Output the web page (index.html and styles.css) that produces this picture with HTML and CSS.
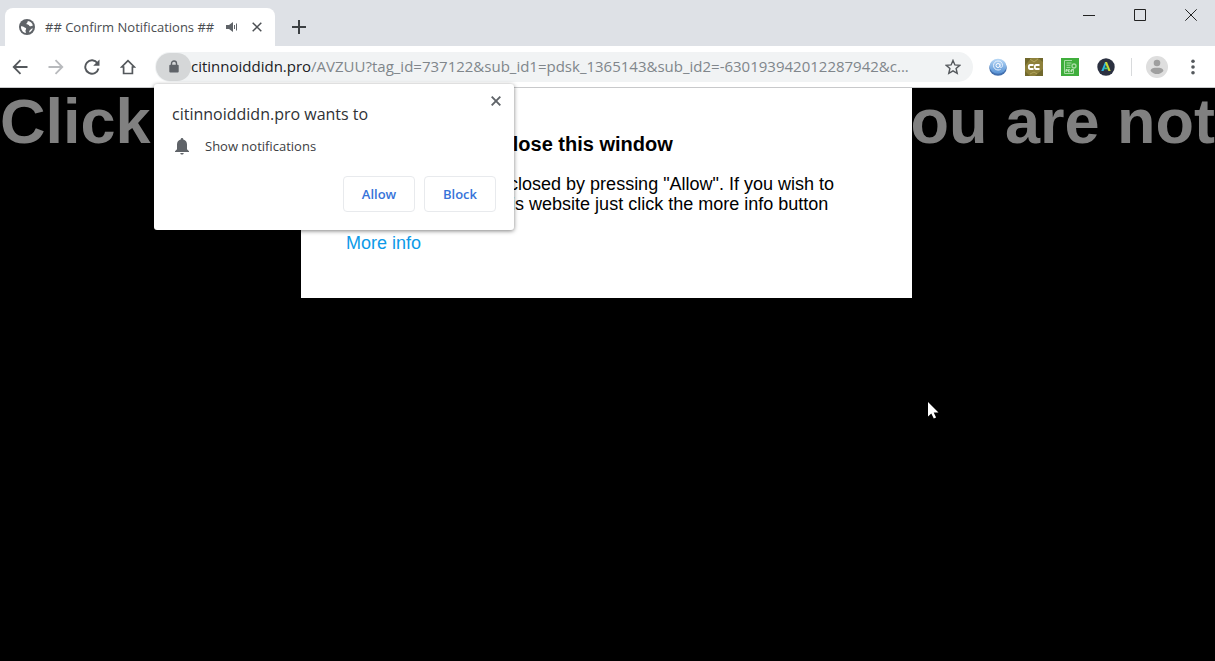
FILE: index.html
```html
<!DOCTYPE html>
<html lang="en">
<head>
<meta charset="utf-8">
<title>## Confirm Notifications ##</title>
<link rel="stylesheet" href="styles.css">
</head>
<body>
<div class="browser">
  <header class="tabstrip">
    <div class="tab">
      <svg class="favicon" viewBox="0 0 16 16"><circle cx="8" cy="8" r="8" fill="#5f6368"/><path d="M2 7.200C3.200 7 4.200 7.300 5 8c.7.700 1.900.500 2.100 1.500.2 1-.8 1.400-.6 2.500.1.800.6 1.300.3 2C4 13.500 1.700 10.800 2 7.200zM8.800 2c2.700.3 4.500 2 5.100 4.400-1.200.2-1.800 1-2.900.8-.9-.2-.8-1.200-1.800-1.400-1-.1-1.800-.2-1.700-1.200.1-.9 1.200-.8 1.300-2.600zM13.800 9.300c-.6 2-1.800 3.400-3.500 4.200-.3-1.200.2-2 1.100-2.800.8-.7 1.400-1.300 2.400-1.400z" fill="#fff"/></svg>
      <span class="tab-title">## Confirm Notifications ##</span>
      <svg class="audio" viewBox="0 0 12 12"><path d="M0 4h3l4-3v10L3 8H0z" fill="#5f6368"/><path d="M8.500 4v4M10.500 2.500v7" stroke="#5f6368" fill="none"/></svg>
      <button class="plain tab-close" aria-label="Close tab"><svg viewBox="0 0 10 10"><path d="M.7.700l8.600 8.600M9.300.700L.7 9.300" stroke="#4b4f53" stroke-width="1.500"/></svg></button>
    </div>
    <button class="plain new-tab" aria-label="New tab"><svg viewBox="0 0 14 14"><path d="M7 0v14M0 7h14" stroke="#3c4043" stroke-width="2"/></svg></button>
    <div class="window-controls">
      <button class="plain" aria-label="Minimize"><svg viewBox="0 0 12 12"><path d="M0 6.500h12" stroke="#222"/></svg></button>
      <button class="plain" aria-label="Maximize"><svg viewBox="0 0 12 12"><path d="M.5.500h11v11H.5z" fill="none" stroke="#222"/></svg></button>
      <button class="plain" aria-label="Close"><svg viewBox="0 0 12 12"><path d="M.3.300l11.400 11.400M11.700.300L.3 11.700" stroke="#222"/></svg></button>
    </div>
  </header>

  <nav class="toolbar">
    <div class="nav-buttons">
      <button class="plain" aria-label="Back"><svg viewBox="0 0 16 16"><path d="M15.500 8H2M8.500 1.200L1.700 8l6.800 6.800" fill="none" stroke="#54585c" stroke-width="1.800"/></svg></button>
      <button class="plain" aria-label="Forward"><svg viewBox="0 0 16 16"><path d="M.5 8H14M7.500 1.200L14.300 8l-6.800 6.800" fill="none" stroke="#b8babd" stroke-width="1.800"/></svg></button>
      <button class="plain" aria-label="Reload"><svg viewBox="0 0 16 16"><path d="M13.500 4.200A6.700 6.700 0 1 0 14.500 9.500" fill="none" stroke="#54585c" stroke-width="1.900"/><path d="M15.500.500v6.300H9.200z" fill="#54585c"/></svg></button>
      <button class="plain" aria-label="Home"><svg viewBox="0 0 16 16"><path d="M8 1.700L1.700 8h1.900v6.500h8.800V8h1.900z" fill="none" stroke="#54585c" stroke-width="1.700"/></svg></button>
    </div>
    <div class="omnibox">
      <button class="plain lock" aria-label="View site information"><svg viewBox="0 0 10 13"><path d="M2.500 6V3.500a2.500 2.500 0 0 1 5 0V6" fill="none" stroke="#5f6368" stroke-width="1.400"/><rect x=".3" y="4.800" width="9.400" height="7.700" rx="1" fill="#5f6368"/></svg></button>
      <div class="url"><span class="host">citinnoiddidn.pro</span>/AVZUU?tag_id=737122&amp;sub_id1=pdsk_1365143&amp;sub_id2=-630193942012287942&amp;c...</div>
      <button class="plain star" aria-label="Bookmark this page"><svg viewBox="0 0 16 16"><path d="M8 1.400l1.900 4.500 4.900.4-3.700 3.200 1.100 4.800L8 11.800l-4.200 2.500 1.100-4.800-3.700-3.200 4.900-.4z" fill="none" stroke="#54585c" stroke-width="1.400"/></svg></button>
    </div>
    <div class="extensions">
      <button class="plain" aria-label="Mail extension"><svg viewBox="0 0 18 18"><defs><linearGradient id="orb" x1="0" y1="0" x2="0" y2="1"><stop offset="0" stop-color="#b8d8f6"/><stop offset="1" stop-color="#5792d5"/></linearGradient></defs><ellipse cx="9" cy="10" rx="8.700" ry="7.700" fill="#426fae"/><ellipse cx="9" cy="8.200" rx="8.500" ry="7.500" fill="url(#orb)"/><circle cx="9" cy="7.500" r="2" fill="none" stroke="#fff"/><path d="M11 5.500v3c0 1.700 2.500 1.200 2.500-1 0-3-2-4.500-4.500-4.500S4.500 5 4.500 7.500 6.500 12 9 12c1 0 2-.2 2.700-.7" fill="none" stroke="#e8f2ff"/></svg></button>
      <button class="plain" aria-label="Captions extension"><svg viewBox="0 0 18 18"><path d="M0 0h18v18H0z" fill="#8d803a"/><path d="M0 0h6L0 8zM18 18h-8l8-7zM0 13l5 5H0zM13 0h5v4z" fill="#70682c"/><path d="M5 1l4 3 4-3M5 16l4-2 3 2" stroke="#b0a45c" fill="none"/><path d="M8.500 7H5.200Q3.800 7 3.800 9t1.400 2h3.300M14.500 7h-3.300Q9.800 7 9.800 9t1.400 2h3.300" fill="none" stroke="#fff" stroke-width="1.800"/></svg></button>
      <button class="plain" aria-label="PDF extension"><svg viewBox="0 0 18 18"><path d="M0 0h18v18H0z" fill="#3fae3c"/><path d="M11 2.500H3.500v13h9V11M5.500 5h5M5.500 7.200h4M5.500 9.400h4" fill="none" stroke="#a6dca3"/><circle cx="13" cy="8" r="2" fill="none" stroke="#a6dca3" stroke-width="1.300"/><path d="M5 14v-2.500h1.300v1.300H5M7.500 11.500v2.500h1l.6-.7v-1.200l-.6-.6zM10.500 14v-2.500H12M10.500 12.700h1.200" fill="none" stroke="#d5f0d2" stroke-width=".8"/></svg></button>
      <button class="plain" aria-label="A extension"><svg viewBox="0 0 18 18"><circle cx="9" cy="9" r="8.700" fill="#2b3040"/><path d="M8 4h2l-3.500 9H4.300z" fill="#28b7e5"/><path d="M8 4h2l3.700 9h-2.300L8.700 6.500z" fill="#c9d934"/><path d="M7.500 9.500h3l.6 1.700H6.900z" fill="#3bc487"/></svg></button>
    </div>
    <span class="divider"></span>
    <button class="plain avatar" aria-label="Profile"><svg viewBox="0 0 22 22"><circle cx="11" cy="11" r="11" fill="#dedede"/><circle cx="11" cy="7" r="3.300" fill="#9f9f9f"/><path d="M4.600 15c0-3 3.400-3.300 6.400-3.300s6.400.300 6.400 3.300c-3.200 4.100-9.600 4.100-12.800 0z" fill="#9f9f9f"/></svg></button>
    <button class="plain menu" aria-label="Menu"><svg viewBox="0 0 4 16"><circle cx="2" cy="2.300" r="1.800" fill="#54585c"/><circle cx="2" cy="8" r="1.800" fill="#54585c"/><circle cx="2" cy="13.700" r="1.800" fill="#54585c"/></svg></button>
  </nav>

  <main class="page">
    <h1 class="banner"><span>Click</span><span>you are not</span></h1>
    <section class="card">
      <h2>Click "Allow" to close this window</h2>
      <p>This window can be closed by pressing "Allow". If you wish to<br>continue browsing this website just click the more info button</p>
      <a href="#">More info</a>
    </section>
  </main>

  <section class="prompt" role="dialog" aria-labelledby="prompt-title">
    <div class="prompt-head">
      <h2 id="prompt-title">citinnoiddidn.pro wants to</h2>
      <button class="plain prompt-close" aria-label="Close"><svg viewBox="0 0 10 10"><path d="M.7.700l8.600 8.600M9.300.700L.7 9.300" stroke="#5f6368" stroke-width="1.900"/></svg></button>
    </div>
    <div class="permission">
      <svg viewBox="0 0 14 17"><path d="M7 0c.8 0 1.300.6 1.300 1.400C10.700 2 12 4 12 6.500v4.700l2 2v.9H0v-.9l2-2V6.500C2 4 3.300 2 5.700 1.400 5.700.600 6.200 0 7 0zM5.300 15h3.400c0 2-3.400 2-3.400 0z" fill="#5f6368"/></svg>
      <span>Show notifications</span>
    </div>
    <div class="actions">
      <button>Allow</button>
      <button>Block</button>
    </div>
  </section>

  <svg class="cursor" viewBox="0 0 11 17"><path d="M0 0v14.500l3.300-3.100 2.500 5.200 2.300-1-2.400-5H10.500z" fill="#fff"/></svg>
</div>
</body>
</html>
```
FILE: styles.css
```css
* { box-sizing: border-box; }

body {
  margin: 0;
  background: #000;
  font-family: "Open Sans", "Noto Sans", sans-serif;
}

svg { display: block; }

.plain {
  display: flex;
  align-items: center;
  justify-content: center;
  padding: 0;
  border: 0;
  background: none;
}

.browser {
  position: relative;
  display: flex;
  flex-direction: column;
  min-height: 100vh;
}

/* Tab strip */
.tabstrip {
  display: flex;
  align-items: flex-end;
  height: 46px;
  padding-left: 5px;
  background: #dee1e6;
}

.tab {
  display: flex;
  align-items: center;
  width: 270px;
  height: 38px;
  padding: 0 13px 0 14px;
  border-radius: 8px 8px 0 0;
  background: #fff;
}

.favicon { width: 16px; height: 16px; }

.tab-title {
  flex: 1;
  margin-left: 10px;
  color: #4a4d51;
  font-size: 13px;
  white-space: nowrap;
}

.audio { width: 12px; height: 12px; margin-right: 14px; }
.tab-close svg { width: 10px; height: 10px; }

.new-tab { width: 48px; height: 38px; }
.new-tab svg { width: 14px; height: 14px; }

.window-controls {
  display: flex;
  align-self: flex-start;
  margin-left: auto;
}

.window-controls button { width: 51px; height: 30px; }
.window-controls button:last-child { width: 48px; margin-left: 2px; }
.window-controls svg { width: 12px; height: 12px; }

/* Toolbar */
.toolbar {
  display: flex;
  align-items: center;
  height: 42px;
  padding-right: 10px;
  border-bottom: 1px solid #c8c9cb;
  background: #fff;
}

.nav-buttons { display: flex; padding: 0 9px 0 2px; }
.nav-buttons button { width: 36px; height: 36px; }
.nav-buttons svg { width: 16px; height: 16px; }

.omnibox {
  display: flex;
  flex: 1;
  align-items: center;
  min-width: 0;
  height: 30px;
  padding: 0 12px 0 1px;
  border-radius: 15px;
  background: #f1f3f4;
}

.lock {
  flex: none;
  width: 35px;
  height: 28px;
  border-radius: 14px;
  background: #d5d7d8;
}

.lock svg { width: 10px; height: 13px; }

.url {
  flex: 1;
  overflow: hidden;
  padding-bottom: 2px;
  color: #80868b;
  font-size: 15px;
  line-height: 22px;
  white-space: nowrap;
}

.host { color: #202124; }
.star svg { width: 16px; height: 16px; }

.extensions { display: flex; margin-left: 7px; }
.extensions button { width: 36px; height: 36px; }
.extensions svg { width: 18px; height: 18px; }

.divider {
  width: 1px;
  height: 18px;
  margin: 0 14px 0 7px;
  background: #d8dadc;
}

.avatar svg { width: 22px; height: 22px; }
.menu { width: 24px; height: 30px; margin-left: 13px; }
.menu svg { width: 4px; height: 16px; }

/* Web page */
.page {
  display: grid;
  flex: 1;
  align-items: start;
  background: #000;
  font-family: "Liberation Sans", Arial, sans-serif;
}

.page > * { grid-area: 1 / 1; }

.banner {
  display: flex;
  justify-content: space-between;
  margin: 0;
  color: #808080;
  font-size: 63px;
  line-height: 66px;
  white-space: nowrap;
}

.card {
  z-index: 1;
  justify-self: center;
  margin-right: 2px;
  padding: 44px 78px 45px 45px;
  background: #fff;
  color: #000;
  font-size: 18px;
  line-height: 20px;
}

.card h2 { margin: 0 0 16px; font-size: 20px; line-height: 24px; }
.card p { margin: 0; padding: 2px 0 19px; }
.card a { color: #0d9ae8; text-decoration: none; }

/* Permission prompt */
.prompt {
  position: absolute;
  z-index: 2;
  top: 84px;
  left: 154px;
  width: 360px;
  padding: 12px 13px 18px 18px;
  border-radius: 3px;
  background: #fff;
  box-shadow: 0 1px 4px rgba(0, 0, 0, 0.5);
}

.prompt-head { display: flex; align-items: flex-start; justify-content: space-between; }

.prompt h2 {
  margin: 7px 0 0;
  color: #2f3236;
  font-size: 16px;
  font-weight: 400;
  line-height: 22px;
}

.prompt-close svg { width: 10px; height: 10px; }

.permission {
  display: flex;
  align-items: center;
  gap: 16px;
  padding: 11px 0 20px 3px;
  color: #3c4043;
  font-size: 13px;
  line-height: 20px;
}

.permission svg { width: 14px; height: 17px; }

.actions {
  display: flex;
  justify-content: flex-end;
  gap: 9px;
  padding-right: 5px;
}

.actions button {
  width: 72px;
  height: 36px;
  padding: 0;
  border: 1px solid #e8eaed;
  border-radius: 4px;
  background: #fff;
  color: #3673d9;
  font: 600 13px "Open Sans", "Noto Sans", sans-serif;
}

.cursor {
  position: absolute;
  z-index: 3;
  top: 402px;
  left: 928px;
  width: 11px;
  height: 17px;
}
```
